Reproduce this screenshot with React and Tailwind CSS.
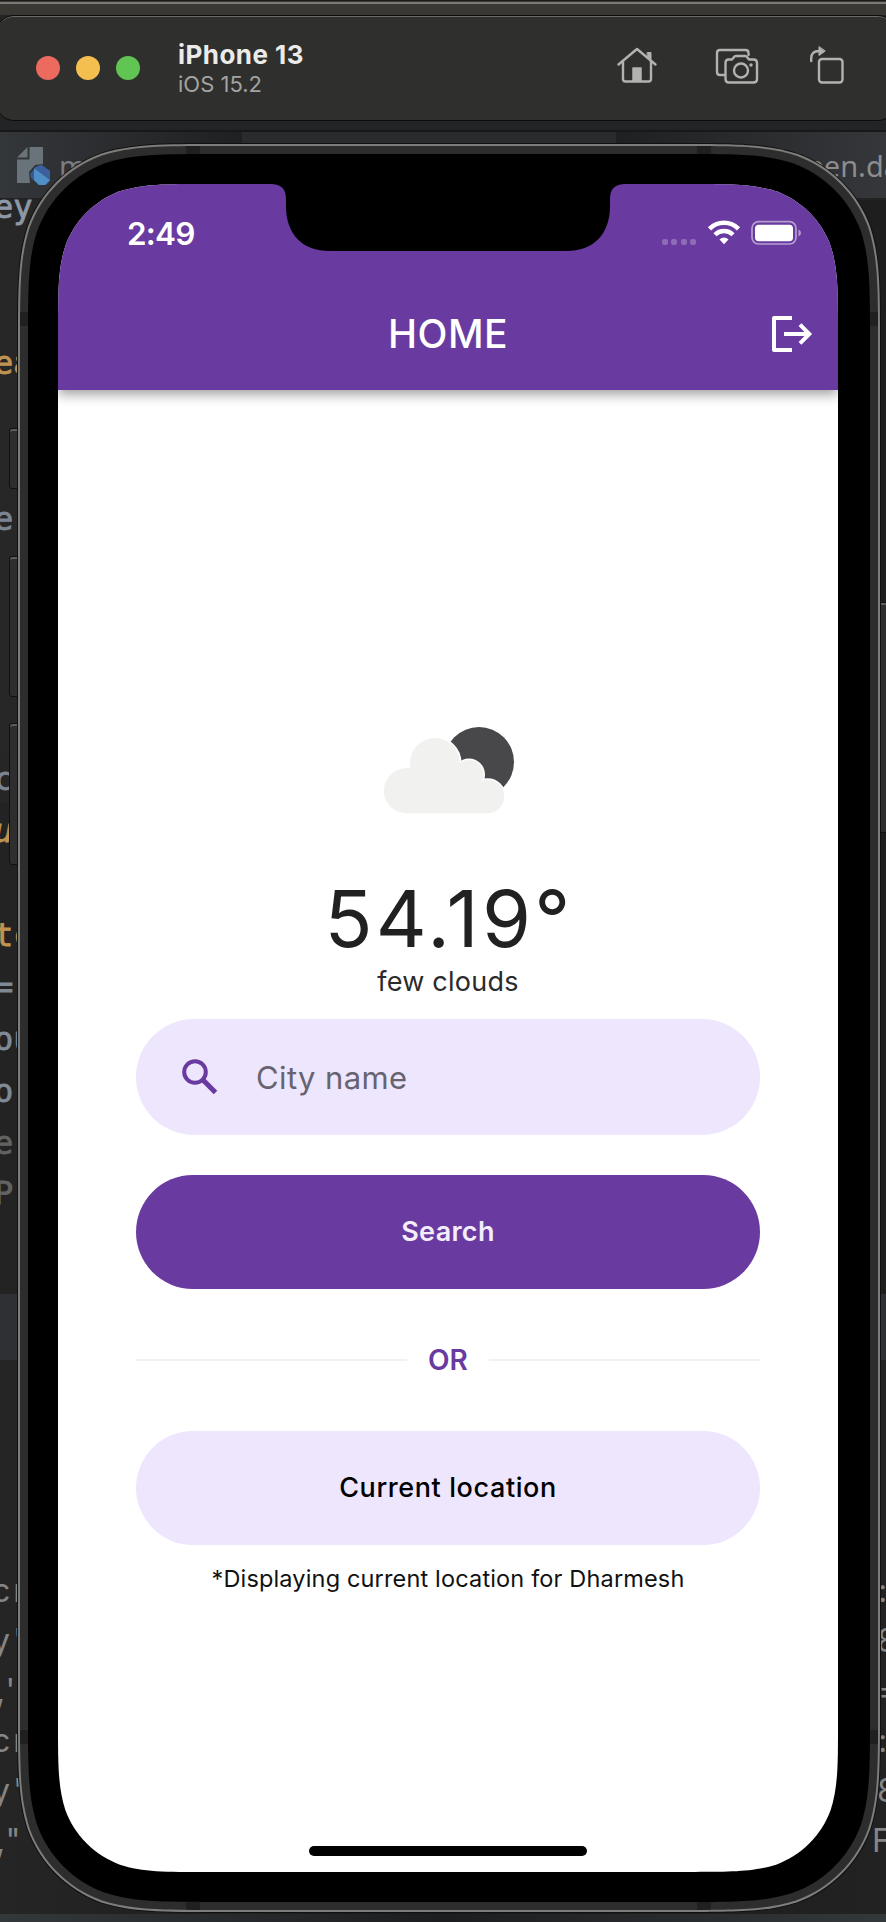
import React from "react";

// Rounded rectangle with continuous-curvature corners.
function smoothRect(w, h, r) {
  const a = 1.528665 * r, b = 1.088493 * r, c = 0.868407 * r, d = 0.631494 * r;
  const e = 0.372824 * r, f = 0.16906 * r, g = 0.074911 * r;
  return [
    `M${a} 0H${w - a}`,
    `C${w - b} 0 ${w - c} 0 ${w - d} ${g}C${w - e} ${f} ${w - f} ${e} ${w - g} ${d}C${w} ${c} ${w} ${b} ${w} ${a}`,
    `V${h - a}`,
    `C${w} ${h - b} ${w} ${h - c} ${w - g} ${h - d}C${w - f} ${h - e} ${w - e} ${h - f} ${w - d} ${h - g}C${w - c} ${h} ${w - b} ${h} ${w - a} ${h}`,
    `H${a}`,
    `C${b} ${h} ${c} ${h} ${d} ${h - g}C${e} ${h - f} ${f} ${h - e} ${g} ${h - d}C0 ${h - c} 0 ${h - b} 0 ${h - a}`,
    `V${a}`,
    `C0 ${b} 0 ${c} ${g} ${d}C${f} ${e} ${e} ${f} ${d} ${g}C${c} 0 ${b} 0 ${a} 0Z`,
  ].join("");
}

function Layer({ w, h, r, className, children }) {
  return (
    <div className={className} style={{ width: w, height: h, clipPath: `path("${smoothRect(w, h, r)}")` }}>
      {children}
    </div>
  );
}

const codeLines = [
  { top: 187, text: "ey", tone: "text-[#8c98a6]" },
  { top: 343, text: "ea", tone: "text-[#bf9450]" },
  { top: 499, text: "e", tone: "text-[#7c8491]" },
  { top: 759, text: "c", tone: "text-[#7c8491]" },
  { top: 811, text: "u", tone: "text-[#bf9450] italic" },
  { top: 915, text: "tc", tone: "text-[#bf9450]" },
  { top: 967, text: "=:", tone: "text-[#7f8a96]" },
  { top: 1019, text: "ou", tone: "text-[#7f8a96]" },
  { top: 1071, text: "o'", tone: "text-[#7f8a96]" },
  { top: 1123, text: "e:", tone: "text-[#626262]" },
  { top: 1173, text: "P;", tone: "text-[#626262]" },
];

const consoleLines = [
  { top: 1571, left: "cr", shift: "-ml-[8px]", right: ":", at: "left-[878px]" },
  { top: 1621, left: "y'", shift: "-ml-[8px]", right: "8", at: "left-[877px]" },
  { top: 1671, left: ",'", shift: "-ml-[4px]", right: "=", at: "left-[878px]" },
  { top: 1721, left: "cr", shift: "-ml-[8px]", right: ":", at: "left-[878px]" },
  { top: 1771, left: "y'", shift: "-ml-[8px]", right: "8", at: "left-[877px]" },
  { top: 1821, left: ",\"", shift: "-ml-[4px]", right: "F", at: "left-[872px]" },
];

function Backdrop() {
  return (
    <div className="absolute inset-0 overflow-hidden">
      <div className="h-[130px] bg-[#232426]" />
      <div className="h-[2px] bg-[#171819]" />
      <div className="flex h-[66px] bg-[#1f2022]">
        <div className="flex w-[242px] shrink-0 items-center bg-linear-to-r from-[#34373a] to-[#1f2022] pl-[17px] pt-[2px]">
          <FileIcon />
          <span className="ml-[8px] font-['Noto_Sans'] text-[29px] text-[#7b7d7e]">main</span>
        </div>
        <div className="w-[374px] shrink-0 bg-[#2a2b2d]" />
        <div className="flex flex-1 items-center justify-end bg-linear-to-r from-[#1f2022] to-[#35373a]">
          <span className="-mr-[14px] mt-[2px] font-['Noto_Sans'] text-[29px] text-[#8b8d8e]">screen.da</span>
        </div>
      </div>
      <div className="h-[2px] bg-[#222]" />
      <div className="h-[552px] bg-linear-to-r from-[#272727] via-[#1c1c1c] to-[#1e1e1e]" />
      <div className="h-[51px] bg-[#262626]" />
      <div className="h-[491px] bg-linear-to-r from-[#232323] via-[#1c1c1c] to-[#1e1e1e]" />
      <div className="h-[66px] bg-[#2e3033]" />
      <div className="h-[554px] bg-linear-to-r from-[#252525] via-[#1a1a1a] to-[#222]" />
      <div className="h-[8px] bg-linear-to-r from-[#33383b] via-[#1c1d1f] to-[#33383b]" />

      {codeLines.map((l) => (
        <div
          key={l.top}
          className={`absolute left-[-6px] font-['DejaVu_Sans_Mono',monospace] text-[32px] leading-[40px] [-webkit-text-stroke:0.8px] ${l.tone}`}
          style={{ top: l.top }}
        >
          {l.text}
        </div>
      ))}
      {consoleLines.map((l) => (
        <div
          key={l.top}
          className="absolute inset-x-0 flex font-['Inter',sans-serif] text-[32px] leading-[40px] text-[#858585]"
          style={{ top: l.top }}
        >
          <span className={`whitespace-pre tracking-[3px] ${l.shift}`}>{l.left}</span>
          <span className={`absolute ${l.at}`}>{l.right}</span>
        </div>
      ))}
    </div>
  );
}

function FileIcon() {
  return (
    <svg className="h-[38px] w-[34px]" viewBox="0 0 34 38">
      <path d="M0 10.500L10.500 0V10.500ZM12.500 0H26V17L18 18L12 25L13 36H0V12.500H12.500Z" fill="#69737a" />
      <path d="M13 27L20 19L25 18L33 24V34L29 38H22L14 31Z" fill="#39598f" />
      <path d="M17 21L33 33L28 38H22L17 33Z" fill="#4f8fc6" />
      <path d="M17 21L24 18L33 24V32Z" fill="#3c609e" />
    </svg>
  );
}

function TitleBar() {
  return (
    <div className="absolute inset-x-0 top-0">
      <div className="h-[15px] border-t border-[#1c1b1a] bg-[#3a3833]">
        <div className="mt-px h-[2px] bg-[#7b7974]" />
      </div>
      <div className="-ml-[4px] -mr-[10px] flex h-[106px] items-center rounded-[18px] border border-[#0c0c0c] bg-[#2f2f2d] pl-[39px] pr-[50px] shadow-[inset_0_2px_0_-1px_#6a6a66]">
        <div className="flex gap-4">
          <div className="size-6 rounded-full bg-[#ec6a5e]" />
          <div className="size-6 rounded-full bg-[#f4bf4f]" />
          <div className="size-6 rounded-full bg-[#61c554]" />
        </div>
        <div className="ml-[38px] flex flex-col pt-[2px] font-['Inter',sans-serif]">
          <span className="text-[26px] font-bold leading-[30px] tracking-[0.45px] text-[#ebebea]">iPhone 13</span>
          <span className="text-[22px] leading-[28px] text-[#a3a3a1]">iOS 15.2</span>
        </div>
        <div className="ml-auto flex items-center pb-[6px]">
          <svg className="h-[38px] w-[42px]" viewBox="0 0 42 38" fill="none" stroke="#b2b2b0" strokeWidth="2.400" strokeLinecap="round" strokeLinejoin="round">
            <path d="M2.500 18.500L21 3L39.500 18.500" />
            <path d="M7 15V33Q7 35.500 9.500 35.500H32.500Q35 35.500 35 33V15" />
            <path d="M31.500 6.500H35V13.500L31.500 10.500Z" fill="#b2b2b0" strokeWidth="1" />
            <path d="M17 22H25V35H17Z" fill="#b2b2b0" strokeWidth="1.500" />
          </svg>
          <svg className="ml-[56px] mt-[2px] h-[38px] w-[46px]" viewBox="0 0 46 38" fill="none" stroke="#b2b2b0" strokeWidth="2.400" strokeLinecap="round" strokeLinejoin="round">
            <path d="M10 28H6Q3 28 3 25V6Q3 3 6 3H31.500Q34.500 3 34.500 6V8" />
            <path d="M14.500 12.500H18L20.500 9.500Q21 9 22 9H31Q32 9 32.500 9.500L35 12.500H39.500Q43 12.500 43 16V32Q43 35.500 39.500 35.500H15Q11.500 35.500 11.500 32V16Q11.500 12.500 14.500 12.500Z" />
            <circle cx="27" cy="23.500" r="7" />
            <circle cx="37" cy="18" r="1.700" fill="#b2b2b0" stroke="none" />
          </svg>
          <svg className="ml-[49px] h-[40px] w-[36px]" viewBox="0 0 36 40" fill="none" stroke="#b2b2b0" strokeWidth="2.400" strokeLinecap="round">
            <rect x="10" y="14" width="23.500" height="23.500" rx="3" />
            <path d="M2.200 16V13.500Q2.200 6 10 6" />
            <path d="M10 2V10.500L16 6.200Z" fill="#b2b2b0" strokeWidth="1" />
          </svg>
        </div>
      </div>
    </div>
  );
}

function SideButton({ className }) {
  return <div className={`absolute border border-[#111] bg-[#2e2e2e] shadow-[inset_0_2px_0_#5c5c5c] ${className}`} />;
}

function StatusBar() {
  return (
    <div className="flex h-[94px] items-start pl-[69px] pr-[36px] pt-[29px] font-['Inter',sans-serif]">
      <span className="mt-px text-[31.500px] font-semibold leading-[40px] tracking-[-0.8px] text-white">2:49</span>
      <div className="ml-auto mt-[7px] flex items-start">
        <div className="mr-[11px] mt-[19px] flex gap-[3.5px]">
          <i className="size-[6px] rounded-[2px] bg-white/25" />
          <i className="size-[6px] rounded-[2px] bg-white/25" />
          <i className="size-[6px] rounded-[2px] bg-white/25" />
          <i className="size-[6px] rounded-[2px] bg-white/25" />
        </div>
        <svg className="h-[25px] w-[34px]" viewBox="0 0 34 25" fill="none" stroke="#fff">
          <path d="M2.500 8.800A20.500 20.500 0 0 1 31.500 8.800" strokeWidth="4.600" />
          <path d="M8 14.800A12.700 12.700 0 0 1 26 14.800" strokeWidth="4.400" />
          <path d="M12.500 19.500A6.300 6.300 0 0 1 21.500 19.500L17 24.300Z" fill="#fff" stroke="none" />
        </svg>
        <svg className="ml-[10px] h-[25px] w-[51px]" viewBox="0 0 51 25">
          <rect x="1" y="1.700" width="44" height="22.300" rx="6.500" fill="none" stroke="#fff" strokeOpacity="0.500" strokeWidth="1.700" />
          <rect x="4" y="4.800" width="38" height="16.500" rx="3.800" fill="#fff" />
          <path d="M47.500 9.500Q50 10.500 50 13T47.500 16.500Z" fill="#fff" fillOpacity="0.500" />
        </svg>
      </div>
    </div>
  );
}

function AppBar() {
  return (
    <div className="relative h-[206px] bg-[#693a9f] shadow-[0_4px_12px_rgba(0,0,0,0.4)]">
      <StatusBar />
      <div className="relative flex h-[112px] items-center justify-center">
        <span className="font-['Inter',sans-serif] text-[39px] font-medium leading-[48px] tracking-[0.5px] text-white">HOME</span>
        <svg className="absolute right-[25px] top-[37px] h-[38px] w-[42px]" viewBox="0 0 42 38" fill="none" stroke="#fff" strokeWidth="4">
          <path d="M21 3H3V35H21" strokeLinejoin="round" />
          <path d="M13 19H38" />
          <path d="M29 9.700L38.300 19L29 28.300" />
        </svg>
      </div>
    </div>
  );
}

function WeatherIcon() {
  return (
    <svg className="h-[100px] w-[140px]" viewBox="0 0 140 100">
      <circle cx="103" cy="47" r="35" fill="#48484a" />
      <g fill="#fff" stroke="#fff" strokeWidth="3">
        <circle cx="59" cy="48" r="25" />
        <circle cx="93" cy="59.500" r="14.500" />
        <circle cx="111.500" cy="81.500" r="16.800" />
      </g>
      <g fill="#f1f1f0">
        <circle cx="59" cy="48" r="25" />
        <circle cx="93" cy="59.500" r="14.500" />
        <circle cx="111.500" cy="81.500" r="16.800" />
        <circle cx="30.500" cy="75.700" r="22.600" />
        <path d="M30 53.500H34L60 40L93 58L111 82V98.300H30Z" />
      </g>
    </svg>
  );
}

function Screen() {
  return (
    <div className="flex h-full flex-col bg-white font-['Inter',sans-serif]">
      <AppBar />
      <div className="flex flex-1 flex-col items-center px-[78px] pt-[325px]">
        <div className="pr-[5px]"><WeatherIcon /></div>
        <div className="mt-[56px] pl-[2px] text-[79px] leading-[94px] tracking-[3.3px] text-[#212121]">54.19°</div>
        <div className="text-[27px] leading-[34px] tracking-[0.25px] text-[#2b2b2b]">few clouds</div>
        <div className="mt-[20px] flex h-[116px] w-full items-center rounded-[58px] bg-[#ede6fd] pl-[46px]">
          <svg className="h-[36px] w-[36px]" viewBox="0 0 36 36" fill="none" stroke="#693a9f" strokeWidth="4">
            <circle cx="13" cy="13" r="10.800" />
            <path d="M20.800 20.800L33.500 33.500" strokeWidth="5" />
          </svg>
          <span className="ml-[38px] mt-[2px] text-[31px] tracking-[0.4px] text-[#67636f]">City name</span>
        </div>
        <button className="mt-[40px] h-[114px] w-full rounded-[57px] bg-[#693a9f] text-[27px] font-semibold tracking-[0.3px] text-[#f3edfc]">Search</button>
        <div className="mt-[54px] flex h-[34px] w-full items-center">
          <div className="h-[2px] flex-1 bg-[#f1f1f1]" />
          <span className="w-[82px] text-center text-[28px] font-semibold text-[#693a9f]">OR</span>
          <div className="h-[2px] flex-1 bg-[#f1f1f1]" />
        </div>
        <button className="mt-[54px] h-[114px] w-full rounded-[57px] bg-[#ede6fd] text-[27px] font-medium tracking-[0.6px] text-black">Current location</button>
        <div className="mt-[18px] whitespace-nowrap text-[23.500px] leading-[32px] tracking-[0.16px] text-[#111]">*Displaying current location for Dharmesh</div>
      </div>
      <div className="mb-[16px] h-[10px] w-[278px] self-center rounded-full bg-black" />
    </div>
  );
}

function Phone() {
  return (
    <div className="absolute left-[17px] top-[143px] h-[1770px] w-[864px]">
      <SideButton className="-left-[8px] top-[285px] h-[61px] w-[10px] rounded-l-[3px]" />
      <SideButton className="-left-[8px] top-[413px] h-[141px] w-[10px] rounded-l-[3px]" />
      <SideButton className="-left-[8px] top-[580px] h-[142px] w-[10px] rounded-l-[3px]" />
      <SideButton className="left-[862px] top-[459px] h-[231px] w-[12px]" />
      <Layer w={864} h={1770} r={132} className="relative bg-[#101010] p-px">
        <Layer w={862} h={1768} r={131} className="bg-[#7d7d7c] p-[2px]">
          <Layer w={858} h={1764} r={129} className="relative bg-[#2d2d2d] p-[8px]">
            <i className="absolute left-[166px] top-0 h-[8px] w-[14px] bg-[#202020]" />
            <i className="absolute left-[677px] top-0 h-[8px] w-[14px] bg-[#202020]" />
            <i className="absolute bottom-0 left-[166px] h-[8px] w-[14px] bg-[#202020]" />
            <i className="absolute bottom-0 left-[677px] h-[8px] w-[14px] bg-[#202020]" />
            <i className="absolute left-0 top-[166px] h-[14px] w-[8px] bg-[#202020]" />
            <i className="absolute right-0 top-[166px] h-[14px] w-[8px] bg-[#202020]" />
            <i className="absolute left-0 top-[1584px] h-[14px] w-[8px] bg-[#202020]" />
            <i className="absolute right-0 top-[1584px] h-[14px] w-[8px] bg-[#202020]" />
            <Layer w={842} h={1748} r={122} className="relative bg-black pl-[30px] pt-[30px]">
              <Layer w={780} h={1688} r={98} className="relative">
                <Screen />
                <svg className="absolute left-[212px] top-0 h-[68px] w-[356px]" viewBox="0 0 356 68">
                  <path d="M0 0C12 0 16 5 16 16V22C16 50 32 67 60 67H296C324 67 340 50 340 22V16C340 5 344 0 356 0Z" fill="#000" />
                </svg>
              </Layer>
            </Layer>
          </Layer>
        </Layer>
      </Layer>
    </div>
  );
}

export default function App() {
  return (
    <div className="relative h-[1922px] w-[886px] overflow-hidden bg-[#1e1e1e]">
      <Backdrop />
      <TitleBar />
      <Phone />
    </div>
  );
}
